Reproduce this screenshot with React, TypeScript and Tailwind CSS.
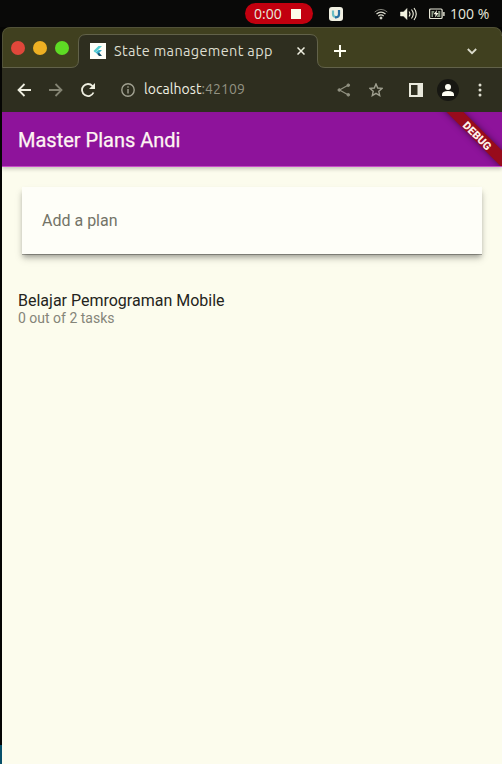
import React from "react";

function StatusBar() {
  return (
    <div className="h-[27px] w-full shrink-0 bg-[#090908] font-['Open_Sans','Noto_Sans',sans-serif] text-[#e8e8dc]">
      <div className="flex h-[27px] items-center pl-[245px]">
        <div className="flex h-[21px] w-[68px] items-center rounded-full bg-[#c2000f] pl-[9px]">
          <span className="w-[37px] text-[14px] leading-none">0:00</span>
          <span className="h-[10px] w-[10px] bg-[#fcfce8]" />
        </div>
        <svg className="ml-4" width="14" height="14" viewBox="0 0 14 14">
          <rect width="14" height="14" rx="3" fill="#f0f0e2" />
          <path d="M4 3.500v3.500a3 3 0 0 0 3 3" fill="none" stroke="#69bec5" strokeWidth="2.2" />
          <path d="M6 10.300h1a3 3 0 0 0 3-3V3" fill="none" stroke="#276fa0" strokeWidth="2.2" />
        </svg>
        <svg className="ml-[31px]" width="14" height="12" viewBox="0 0 14 12" fill="none" stroke="#deded0">
          <path d="M.7 4Q7-1.2 13.3 4" opacity=".55" />
          <path d="M2.5 6Q7 2.3 11.5 6M4.3 8Q7 5.8 9.7 8" strokeWidth="1.2" />
          <circle cx="7" cy="10" r="1" fill="#deded0" />
        </svg>
        <svg className="ml-[12px]" width="18" height="14" viewBox="0 0 18 14" fill="none" stroke="#f2f2e0">
          <path d="M.5 5h3L7 1.5v11L3.500 9h-3z" fill="#f2f2e0" strokeWidth=".5" />
          <path d="M9 4.500q2 2.500 0 5M11.500 2.500q3.500 4.500 0 9M14 1q4.500 6 0 12" strokeWidth="1.1" />
        </svg>
        <svg className="ml-[11px]" width="16" height="12" viewBox="0 0 16 12" fill="none" stroke="#e8e8d8">
          <rect x=".6" y="1" width="12.500" height="9.500" rx="1" strokeWidth="1.2" />
          <path d="M14.900 4v4" strokeWidth="1.4" />
          <path d="M2.500 3h3L4 6v3H2.500zM9 3h2.300v6H7.500l2-3z" fill="#879681" stroke="none" />
          <path d="M8 2 4.500 6.300h2.200L5.800 9.500 9.800 5H7.500z" fill="#f4f4e4" stroke="none" />
        </svg>
        <span className="ml-[5px] whitespace-nowrap text-[14px] leading-none">100 %</span>
      </div>
    </div>
  );
}

function TabStrip() {
  return (
    <div className="relative flex h-[41px] shrink-0 items-center overflow-hidden rounded-t-[8px] bg-[#40401f] font-[Ubuntu,'Noto_Sans',sans-serif]">
      <svg className="absolute inset-0" width="500" height="41" viewBox="0 0 500 41">
        <path d="M0 40.500H69Q76.500 40.500 76.500 33V15Q76.500 7.500 84 7.500H308Q315.500 7.500 315.500 15V33Q315.500 40.500 323 40.500H500V42H0z" fill="#2e2e1f" stroke="#62624a" />
        <path d="M.5 41V9Q.5.5 9 .5H491Q499.500.5 499.500 9" fill="none" stroke="#525238" />
      </svg>
      <div className="relative flex w-full items-center">
        <div className="flex gap-[8px] pl-[9px]">
          <span className="h-[14px] w-[14px] rounded-full bg-[#e0473a]" />
          <span className="h-[14px] w-[14px] rounded-full bg-[#edb023]" />
          <span className="h-[14px] w-[14px] rounded-full bg-[#5edb24]" />
        </div>
        <svg className="ml-[21px] mt-[7px]" width="16" height="16" viewBox="0 0 16 16">
          <path d="M0 0h16v16H0z" fill="#fffff8" />
          <path d="m3.500 8 5-5H12L5.300 9.700z" fill="#55cfd0" />
          <path d="M8.700 7H12L9.300 9.700 7.500 11.300 5.700 9.500z" fill="#38b3cd" />
          <path d="m7.300 11 1.700-1.500L12 13H9z" fill="#174e68" />
        </svg>
        <span className="ml-2 mt-[7px] w-[183px] whitespace-nowrap text-[14.5px] leading-5 tracking-[0.34px] text-[#deded0]">State management app</span>
        <svg className="mt-[7px]" width="8" height="8" viewBox="0 0 8 8" stroke="#eeeee0" strokeWidth="1.500"><path d="m.5.500 7 7m0-7-7 7" /></svg>
        <svg className="ml-[29px] mt-[7px]" width="12" height="12" viewBox="0 0 12 12" stroke="#fffff2" strokeWidth="2"><path d="M6 0v12M0 6h12" /></svg>
        <svg className="ml-[121px] mt-[7px]" width="10" height="7" viewBox="0 0 10 7" fill="none" stroke="#dadacb" strokeWidth="1.800"><path d="m.8 1 4.200 4.200L9.200 1" /></svg>
      </div>
    </div>
  );
}

function Toolbar() {
  return (
    <div className="flex h-[44px] shrink-0 items-center bg-[#2e2e1f] pl-[15px]">
      <svg width="14" height="14" viewBox="0 0 14 14" fill="none" stroke="#eeeee0" strokeWidth="1.800"><path d="M14 7H1.500M7.500 1 1.500 7l6 6" /></svg>
      <svg className="ml-[18px]" width="14" height="14" viewBox="0 0 14 14" fill="none" stroke="#848473" strokeWidth="1.800"><path d="M0 7h12.500M6.500 1l6 6-6 6" /></svg>
      <svg className="ml-[18px]" width="15" height="14" viewBox="0 0 15 14" fill="none" stroke="#eeeee0" strokeWidth="1.800"><path d="M12.500 9.500A6 6 0 1 1 11.500 3L13 4.500" /><path d="M14 0v6H8z" fill="#eeeee0" stroke="none" /></svg>
      <svg className="ml-[25px]" width="14" height="14" viewBox="0 0 14 14" fill="none" stroke="#a1a191" strokeWidth="1.400"><circle cx="7" cy="7" r="6.200" /><path d="M7 6v4.500M7 3.200v1.500" /></svg>
      <span className="ml-[9px] w-[193px] -translate-y-px whitespace-nowrap font-[Ubuntu,'Noto_Sans',sans-serif] text-[14px] leading-5 tracking-[0.07px] text-[#f0f0e2]">localhost<span className="text-[#929282]">:42109</span></span>
      <svg width="14" height="14" viewBox="0 0 14 14" fill="#929282" stroke="#929282"><path d="M11 2.300 2.500 7l8.500 4.700" fill="none" strokeWidth="1.200" /><circle cx="11.300" cy="2.200" r="1.300" /><circle cx="2.300" cy="7" r="1.300" /><circle cx="11.300" cy="11.800" r="1.300" /></svg>
      <svg className="ml-[18px]" width="14" height="14" viewBox="0 0 14 14" fill="none" stroke="#a0a090" strokeWidth="1.400"><path d="m7 1 1.700 4 4.300.4-3.200 2.900.9 4.300L7 10.400l-3.700 2.200.9-4.300L1 5.400 5.300 5z" /></svg>
      <svg className="ml-[26px]" width="14" height="14" viewBox="0 0 14 14"><path d="M0 0h14v14H0z" fill="#e9e9dc" /><path d="M2 2h6.500v10H2z" fill="#2e2e1f" /></svg>
      <svg className="ml-[13px]" width="24" height="24" viewBox="0 0 24 24"><circle cx="12" cy="12" r="11" fill="#171712" /><circle cx="12" cy="9" r="3" fill="#fffff4" /><path d="M6 18v-1.500Q6 13 12 13t6 3.500V18z" fill="#fffff4" /></svg>
      <svg className="ml-[18px]" width="4" height="14" viewBox="0 0 4 14" fill="#dfdfd1"><circle cx="2" cy="2" r="1.500" /><circle cx="2" cy="7" r="1.500" /><circle cx="2" cy="12" r="1.500" /></svg>
    </div>
  );
}

export default function App() {
  return (
    <div className="relative flex h-[764px] w-[502px] flex-col overflow-hidden bg-[#050504]">
      <StatusBar />
      <div className="flex min-h-0 flex-1 flex-col pl-[2px]">
        <TabStrip />
        <Toolbar />
        <main className="min-h-0 flex-1 overflow-hidden bg-[#fcfced] font-[Roboto,sans-serif]">
          <header className="relative h-[55px] shadow-[0_2px_4px_rgba(0,0,0,.22)]">
            <div className="relative flex h-full items-center overflow-hidden border-b border-[#c64bc7] bg-[#8e139b] pl-4 pt-[2px]">
              <h1 className="text-[20px] font-normal leading-6 text-[#fff5f2] [-webkit-text-stroke:0.25px_#fff5f2]">Master Plans Andi</h1>
              <div className="absolute right-[-26px] top-[17px] flex h-[12px] w-[100px] rotate-45 items-center justify-center bg-[#980b1c] text-[11px] font-black leading-none text-[#fff0ec] shadow-[0_0_6px_rgba(0,0,0,.5)]">
                <span className="translate-y-px">DEBUG</span>
              </div>
            </div>
          </header>
          <div className="mx-5 mt-5 flex h-[67px] w-[460px] items-center bg-[#fefef8] px-5 text-[16px] text-[#737367] shadow-[0_1px_0_rgba(0,0,0,.28),0_4px_5px_-1px_rgba(0,0,0,.28),0_5px_8px_rgba(0,0,0,.12)]">Add a plan</div>
          <section className="px-4 pt-[37px]">
            <h2 className="text-[16px] leading-[19px] text-[#242420]">Belajar Pemrograman Mobile</h2>
            <p className="text-[14px] leading-[16px] text-[#858579]">0 out of 2 tasks</p>
          </section>
        </main>
      </div>
      <span className="absolute bottom-0 left-0 h-[19px] w-[2px] bg-[#07506a]" />
    </div>
  );
}
